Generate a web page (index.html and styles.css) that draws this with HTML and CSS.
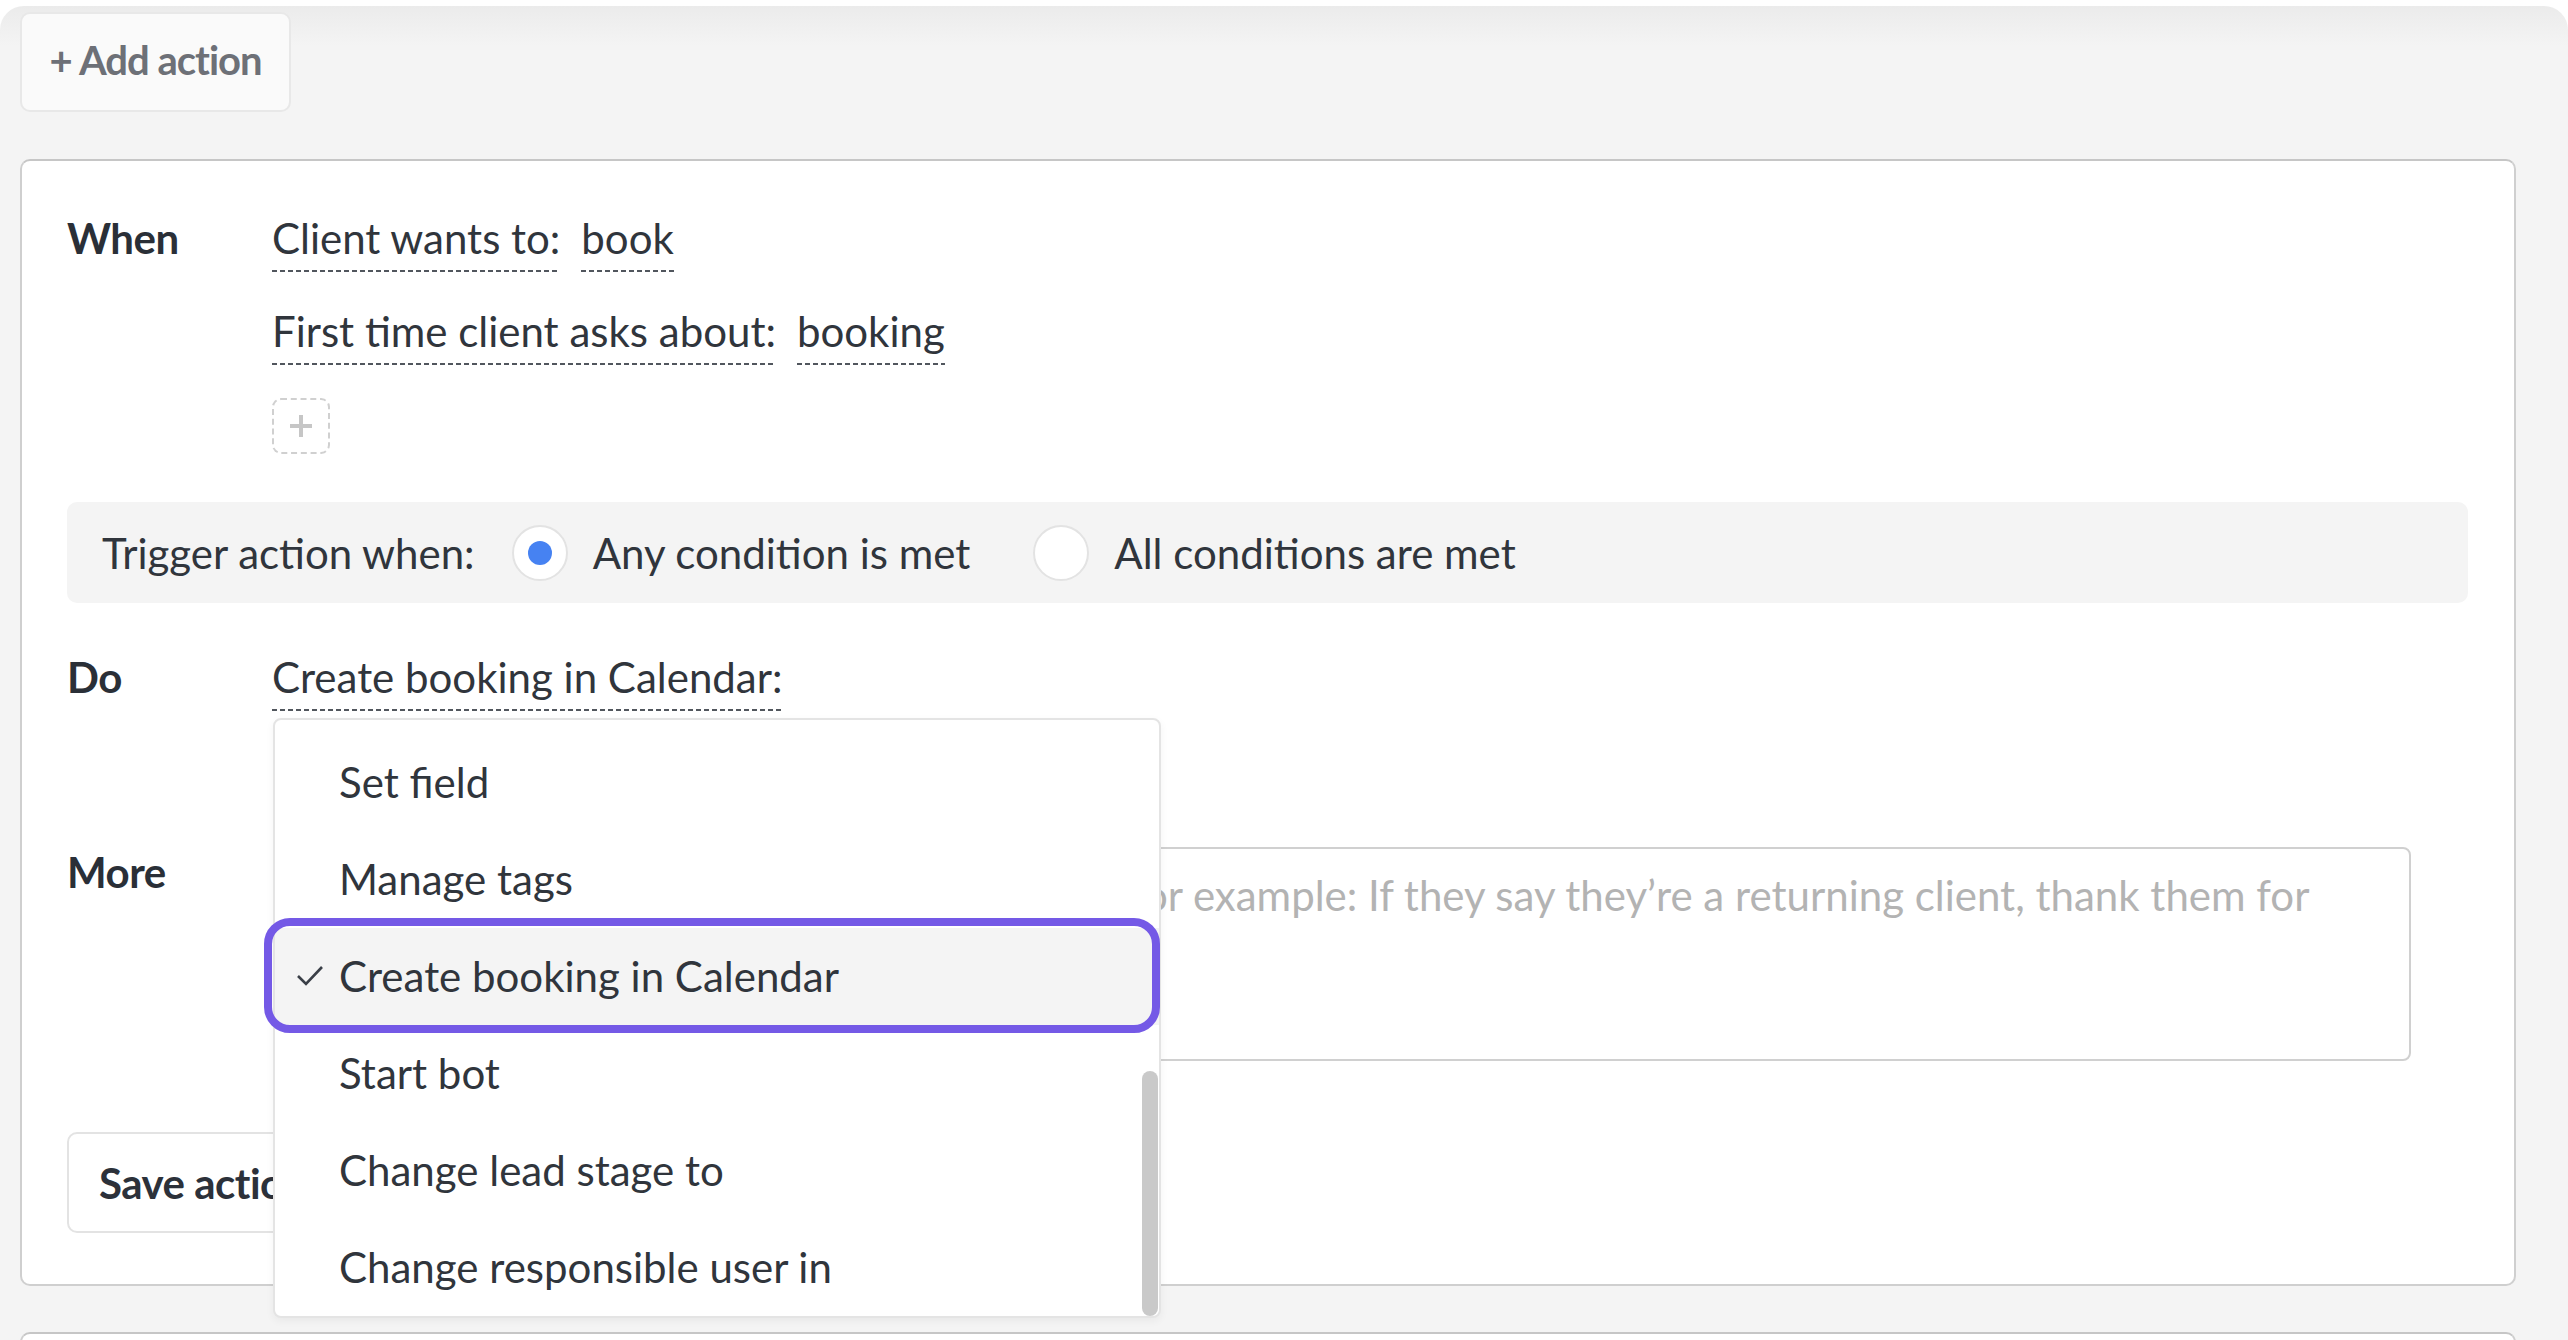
FILE: index.html
```html
<!DOCTYPE html>
<html lang="en">
<head>
    <meta charset="UTF-8">
    <meta name="viewport" content="width=device-width, initial-scale=1.0">
    <title>Actions</title>
    <link rel="stylesheet" href="styles.css">
</head>
<body>
    <div class="panel">
        <button class="add-btn">+ Add action</button>
        <section class="card">
            <div class="row">
                <div class="label">When</div>
                <div class="conds">
                    <div class="cond">
                        <span class="dash">Client wants to:</span>
                        <span class="dash">book</span>
                    </div>
                    <div class="cond">
                        <span class="dash">First time client asks about:</span>
                        <span class="dash">booking</span>
                    </div>
                    <button class="add-cond" aria-label="Add condition"></button>
                </div>
            </div>
            <div class="trigger">
                <span class="trigger-label">Trigger action when:</span>
                <label class="option"><span class="radio checked"></span>Any condition is met</label>
                <label class="option"><span class="radio"></span>All conditions are met</label>
            </div>
            <div class="row row-do">
                <div class="label">Do</div>
                <div class="do-value">
                    <span class="dash">Create booking in Calendar:</span>
                    <div class="dropdown">
                        <ul>
                            <li>Set field</li>
                            <li>Manage tags</li>
                            <li class="selected">
                                <svg class="check" width="28" height="22" viewBox="0 0 28 22"><polyline points="2,11 10,19 26,2" fill="none" stroke="#3a3f47" stroke-width="2.6"/></svg>
                                Create booking in Calendar
                            </li>
                            <li>Start bot</li>
                            <li>Change lead stage to</li>
                            <li>Change responsible user in</li>
                        </ul>
                        <div class="thumb"></div>
                    </div>
                </div>
            </div>
            <div class="row row-more">
                <div class="label">More</div>
                <textarea class="more-input" placeholder="For example: If they say they’re a returning client, thank them for"></textarea>
            </div>
            <button class="save-btn">Save action</button>
        </section>
        <section class="card card-next"></section>
    </div>
</body>
</html>
```

FILE: styles.css
```css
html, body {
    margin: 0;
    padding: 0;
    height: 100%;
    overflow: hidden;
    background: #fff;
}
body {
    font-family: 'Lato', 'Roboto', sans-serif;
    font-size: 42px;
    color: #30353c;
}
.panel {
    margin-top: 6px;
    min-height: 1400px;
    padding: 6px 52px 0 20px;
    background: linear-gradient(to bottom, #ebebeb, #f4f4f4 40px);
    border-radius: 24px 24px 0 0;
}
.add-btn {
    display: block;
    width: 271px;
    height: 100px;
    padding: 0 0 4px;
    border: 2px solid #e8e8e8;
    border-radius: 10px;
    background: #fafafa;
    color: #6d7077;
    font-family: inherit;
    font-size: 40px;
    font-weight: 700;
    letter-spacing: -1px;
    cursor: pointer;
}
.card {
    margin-top: 47px;
    padding: 57px 46px 51px 45px;
    background: #fff;
    border: 2px solid #cfcfcf;
    border-top-color: #c6c6c6;
    border-radius: 10px;
}
.card-next {
    margin-top: 46px;
    height: 200px;
    padding: 0;
}
.row {
    display: grid;
    grid-template-columns: 205px 1fr;
    align-items: start;
}
.label {
    font-weight: 700;
    line-height: 41px;
    color: #2a2f37;
    letter-spacing: -0.5px;
}
.conds {
    display: flex;
    flex-direction: column;
    align-items: flex-start;
    gap: 39px;
}
.cond {
    display: flex;
    gap: 21px;
}
.dash {
    display: inline-block;
    line-height: 41px;
    padding-bottom: 13px;
    background: linear-gradient(to right, #51565d 62%, transparent 0) left bottom / 8px 2px repeat-x;
}
.add-cond {
    position: relative;
    width: 58px;
    height: 56px;
    margin-top: -6px;
    padding: 0;
    border: 2px dashed #d0d0d0;
    border-radius: 9px;
    background: #fff;
    cursor: pointer;
}
.add-cond::before, .add-cond::after {
    content: '';
    position: absolute;
    left: 50%;
    top: 50%;
    background: #c6c6c6;
    transform: translate(-50%, -50%);
}
.add-cond::before {
    width: 22px;
    height: 4px;
}
.add-cond::after {
    width: 4px;
    height: 22px;
}

/* trigger mode strip */
.trigger {
    display: flex;
    align-items: center;
    height: 101px;
    margin-top: 48px;
    padding-left: 35px;
    background: #f4f4f4;
    border-radius: 10px;
}
.trigger-label {
    margin-right: 37px;
}
.option {
    display: flex;
    align-items: center;
    gap: 25px;
    margin-right: 63px;
}
.radio {
    display: flex;
    align-items: center;
    justify-content: center;
    width: 56px;
    height: 56px;
    box-sizing: border-box;
    border: 2px solid #e3e3e3;
    border-radius: 50%;
    background: #fff;
}
.radio.checked::after {
    content: '';
    width: 24px;
    height: 24px;
    border-radius: 50%;
    background: #4682f2;
}

.row-do {
    margin-top: 49px;
}
.row-do .label {
    margin-top: 5px;
}
.do-value {
    position: relative;
}
.dropdown {
    position: absolute;
    z-index: 5;
    top: calc(100% + 7px);
    left: 1px;
    width: 888px;
    height: 600px;
    box-sizing: border-box;
    background: #fff;
    border: 2px solid #e4e4e4;
    border-radius: 8px;
    box-shadow: 0 3px 8px rgba(0, 0, 0, 0.05);
}
.dropdown ul {
    list-style: none;
    margin: 0;
    padding: 14px 0 0;
}
.dropdown li {
    position: relative;
    height: 97px;
    line-height: 97px;
    padding-left: 64px;
}
.dropdown li.selected {
    background: #f4f4f4;
}
.dropdown li.selected::after {
    content: '';
    position: absolute;
    top: -10px;
    bottom: -8px;
    left: -11px;
    right: -1px;
    border: 8px solid #7459e6;
    border-radius: 26px;
}
.check {
    position: absolute;
    left: 21px;
    top: 37px;
}
.thumb {
    position: absolute;
    right: 1px;
    top: 351px;
    width: 16px;
    height: 245px;
    border-radius: 8px;
    background: #c9c9c9;
}

.row-more {
    margin-top: 136px;
}
.row-more .label {
    margin-top: 5px;
}
.more-input {
    display: block;
    height: 214px;
    margin: 0 57px 0 820px;
    padding: 25px 28px;
    box-sizing: border-box;
    border: 2px solid #d0d0d0;
    border-radius: 8px;
    font-family: inherit;
    font-size: 42px;
    line-height: 42px;
    color: #30353c;
    resize: none;
    overflow: hidden;
}
.more-input::placeholder {
    color: #b3b3b3;
}
.save-btn {
    display: block;
    height: 101px;
    margin-top: 71px;
    padding: 0 30px;
    border: 2px solid #e3e3e3;
    border-radius: 10px;
    background: #fff;
    color: #2c313a;
    font-family: inherit;
    font-size: 42px;
    font-weight: 700;
    letter-spacing: -0.5px;
    cursor: pointer;
}
```
